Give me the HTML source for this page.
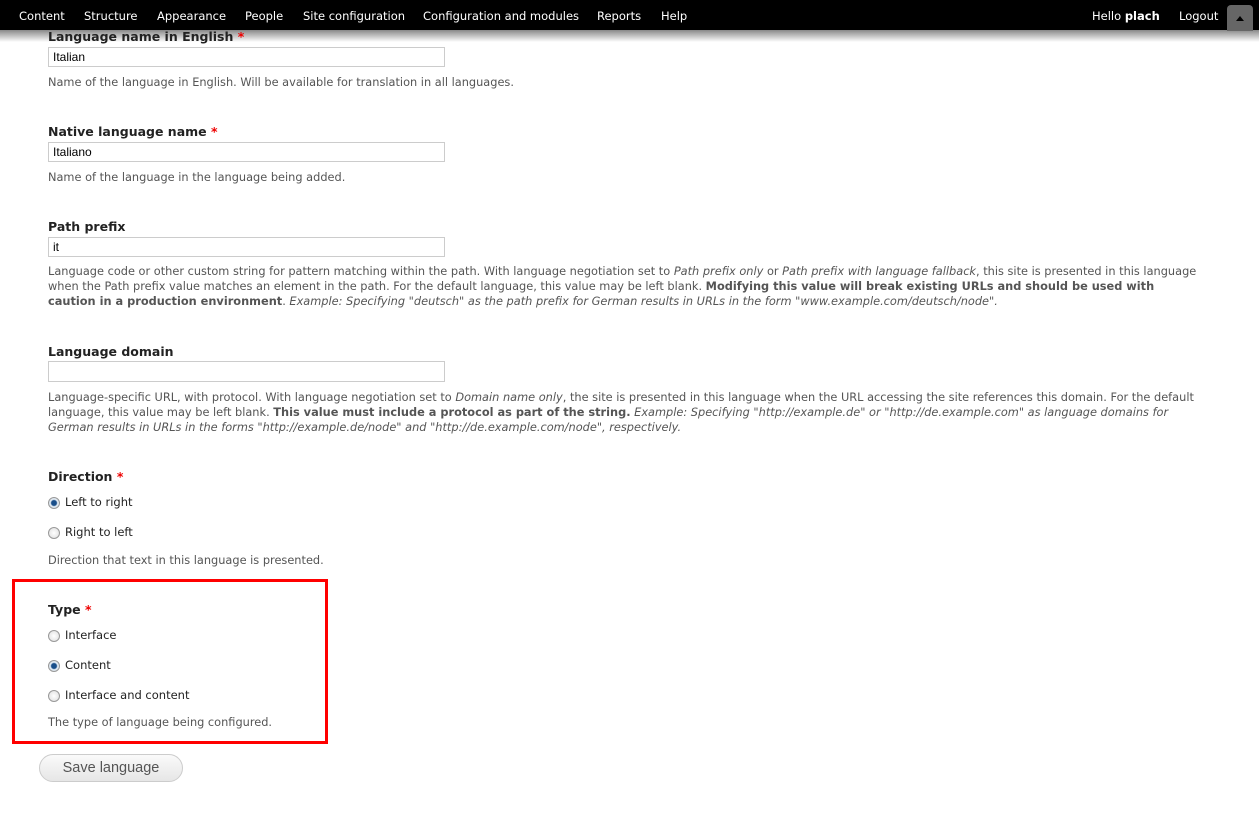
<!DOCTYPE html>
<html><head><meta charset="utf-8"><style>
body{margin:0;width:1259px;height:833px;background:#fff;font-family:"DejaVu Sans","Liberation Sans",sans-serif;position:relative;overflow:hidden;color:#333}
#tb{position:absolute;left:0;top:0;width:1259px;height:30px;background:#000;color:#fff;font-size:11.5px;font-family:"DejaVu Sans",sans-serif}
#tb span{position:absolute;top:9px;white-space:nowrap}
#sh{position:absolute;left:0;top:30px;width:1259px;height:12px;background:linear-gradient(#888,#fff)}
.l{position:absolute;left:48px;font-weight:bold;font-size:12.5px;color:#222;white-space:nowrap}
.l b{color:#e00}
.i{position:absolute;left:48px;height:20px;border:1px solid #ccc;box-sizing:border-box;width:397px;font-size:12px;font-family:"Liberation Sans",sans-serif;padding:2px 4px;color:#000}
.d{position:absolute;left:48px;font-size:11.35px;color:#555;white-space:nowrap;line-height:15px}
.r{position:absolute;left:48px;font-size:11.5px;color:#222;white-space:nowrap}
.r i{display:inline-block;width:12px;height:12px;border-radius:50%;border:1px solid #999;background:radial-gradient(#fff,#ddd);vertical-align:-2px;margin-right:5px;box-sizing:border-box;position:relative;top:1px}
.r i.on{background:radial-gradient(#1a4f8a 0 2.5px,#dfe8f0 3.5px)}
</style></head><body>
<div id="sh"></div>
<div id="tb">
<span style="left:19px">Content</span><span style="left:84px">Structure</span><span style="left:157px">Appearance</span><span style="left:245px">People</span><span style="left:303px">Site configuration</span><span style="left:423px">Configuration and modules</span><span style="left:597px">Reports</span><span style="left:661px">Help</span>
<span style="left:1092px">Hello <b>plach</b></span><span style="left:1179px">Logout</span>
<div style="position:absolute;left:1227px;top:5px;width:26px;height:26px;background:#666;border-radius:4px 4px 0 0"><div style="position:absolute;left:9px;top:11px;border-left:4px solid transparent;border-right:4px solid transparent;border-bottom:5px solid #000"></div></div>
</div>

<div class="l" style="top:29px">Language name in English <b>*</b></div>
<div class="i" style="top:47px">Italian</div>
<div class="d" style="top:75px">Name of the language in English. Will be available for translation in all languages.</div>

<div class="l" style="top:124px">Native language name <b>*</b></div>
<div class="i" style="top:142px">Italiano</div>
<div class="d" style="top:170px">Name of the language in the language being added.</div>

<div class="l" style="top:219px">Path prefix</div>
<div class="i" style="top:237px">it</div>
<div class="d" style="top:264px">Language code or other custom string for pattern matching within the path. With language negotiation set to <i>Path prefix only</i> or <i>Path prefix with language fallback</i>, this site is presented in this language<br>when the Path prefix value matches an element in the path. For the default language, this value may be left blank. <b>Modifying this value will break existing URLs and should be used with</b><br><b>caution in a production environment</b>. <i>Example: Specifying "deutsch" as the path prefix for German results in URLs in the form "www.example.com/deutsch/node".</i></div>

<div class="l" style="top:344px">Language domain</div>
<div class="i" style="top:361px;height:21px"></div>
<div class="d" style="top:390px">Language-specific URL, with protocol. With language negotiation set to <i>Domain name only</i>, the site is presented in this language when the URL accessing the site references this domain. For the default<br>language, this value may be left blank. <b>This value must include a protocol as part of the string.</b> <i>Example: Specifying "http://example.de" or "http://de.example.com" as language domains for</i><br><i>German results in URLs in the forms "http://example.de/node" and "http://de.example.com/node", respectively.</i></div>

<div class="l" style="top:469px">Direction <b>*</b></div>
<div class="r" style="top:495px"><i class="on"></i>Left to right</div>
<div class="r" style="top:525px"><i></i>Right to left</div>
<div class="d" style="top:553px">Direction that text in this language is presented.</div>

<div style="position:absolute;left:12px;top:579px;width:316px;height:165px;border:3px solid #f00;box-sizing:border-box"></div>
<div class="l" style="top:602px">Type <b>*</b></div>
<div class="r" style="top:628px"><i></i>Interface</div>
<div class="r" style="top:658px"><i class="on"></i>Content</div>
<div class="r" style="top:688px"><i></i>Interface and content</div>
<div class="d" style="top:715px">The type of language being configured.</div>

<div style="position:absolute;left:39px;top:754px;width:144px;height:28px;box-sizing:border-box;border:1px solid #ccc;border-radius:14px;background:linear-gradient(#fafafa,#e6e6e6);font-family:'Liberation Sans',sans-serif;font-size:14.5px;color:#555;text-align:center;line-height:27px">Save language</div>
</body></html>
